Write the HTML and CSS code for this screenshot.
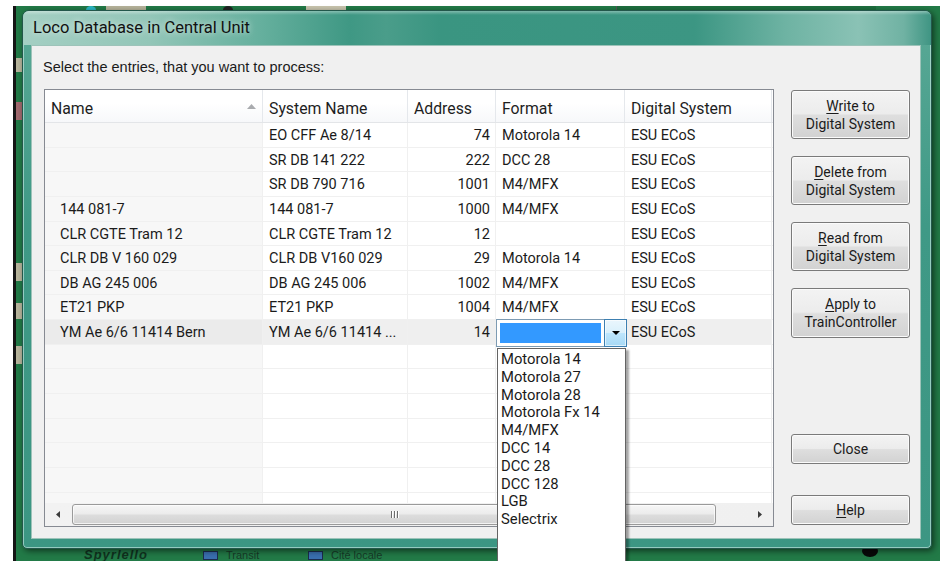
FILE: index.html
```html
<!DOCTYPE html>
<html lang="en">
<head>
<meta charset="utf-8">
<title>Loco Database in Central Unit</title>
<link rel="stylesheet" href="styles.css">
</head>
<body>
<!-- layout canvas of the host application, partly hidden by the dialog -->
<div class="desktop">
  <div class="track-strip">
    <span class="tile tile-a"></span>
    <span class="knob knob-a"></span>
    <span class="tile tile-b"></span>
    <span class="knob knob-b"></span>
    <span class="tile tile-c"></span>
  </div>
  <div class="side-tiles">
    <span class="stile s1"></span>
    <span class="stile s2"></span>
    <span class="stile s3"></span>
    <span class="stile s4"></span>
    <span class="stile s5"></span>
  </div>
  <div class="legend">
    <span class="legend-brand">Spyrlello</span>
    <span class="legend-item legend-transit"><i class="swatch"></i>Transit</span>
    <span class="legend-item legend-local"><i class="swatch"></i>Cité locale</span>
  </div>
  <span class="bollard"></span>
</div>

<div class="window">
  <div class="titlebar">Loco Database in Central Unit</div>
  <div class="client">
    <div class="prompt">Select the entries, that you want to process:</div>
    <div class="main">
      <div class="listview">
        <div class="lv-header">
          <div class="hcell hcell-name">Name
            <svg class="sort-arrow" width="9" height="5" viewBox="0 0 9 5"><polygon points="0,5 4.5,0 9,5" fill="#a9abae"/></svg>
          </div>
          <div class="hcell">System Name</div>
          <div class="hcell">Address</div>
          <div class="hcell">Format</div>
          <div class="hcell">Digital System</div>
        </div>
        <div class="lv-body">
          <div class="row"><div class="c c-name"></div><div class="c">EO CFF Ae 8/14</div><div class="c c-addr">74</div><div class="c">Motorola 14</div><div class="c">ESU ECoS</div></div>
          <div class="row"><div class="c c-name"></div><div class="c">SR DB 141 222</div><div class="c c-addr">222</div><div class="c">DCC 28</div><div class="c">ESU ECoS</div></div>
          <div class="row"><div class="c c-name"></div><div class="c">SR DB 790 716</div><div class="c c-addr">1001</div><div class="c">M4/MFX</div><div class="c">ESU ECoS</div></div>
          <div class="row"><div class="c c-name">144 081-7</div><div class="c">144 081-7</div><div class="c c-addr">1000</div><div class="c">M4/MFX</div><div class="c">ESU ECoS</div></div>
          <div class="row"><div class="c c-name">CLR CGTE Tram 12</div><div class="c">CLR CGTE Tram 12</div><div class="c c-addr">12</div><div class="c"></div><div class="c">ESU ECoS</div></div>
          <div class="row"><div class="c c-name">CLR DB V 160 029</div><div class="c">CLR DB V160 029</div><div class="c c-addr">29</div><div class="c">Motorola 14</div><div class="c">ESU ECoS</div></div>
          <div class="row"><div class="c c-name">DB AG 245 006</div><div class="c">DB AG 245 006</div><div class="c c-addr">1002</div><div class="c">M4/MFX</div><div class="c">ESU ECoS</div></div>
          <div class="row"><div class="c c-name">ET21 PKP</div><div class="c">ET21 PKP</div><div class="c c-addr">1004</div><div class="c">M4/MFX</div><div class="c">ESU ECoS</div></div>
          <div class="row row-selected"><div class="c c-name">YM Ae 6/6 11414 Bern</div><div class="c">YM Ae 6/6 11414 ...</div><div class="c c-addr">14</div>
            <div class="c c-edit">
              <div class="combo">
                <span class="combo-value"></span>
                <span class="combo-btn"><svg width="8" height="4" viewBox="0 0 8 4"><polygon points="0,0 8,0 4,4" fill="#000"/></svg></span>
              </div>
            </div>
            <div class="c">ESU ECoS</div></div>
          <div class="row"><div class="c c-name"></div><div class="c"></div><div class="c c-addr"></div><div class="c"></div><div class="c"></div></div>
          <div class="row"><div class="c c-name"></div><div class="c"></div><div class="c c-addr"></div><div class="c"></div><div class="c"></div></div>
          <div class="row"><div class="c c-name"></div><div class="c"></div><div class="c c-addr"></div><div class="c"></div><div class="c"></div></div>
          <div class="row"><div class="c c-name"></div><div class="c"></div><div class="c c-addr"></div><div class="c"></div><div class="c"></div></div>
          <div class="row"><div class="c c-name"></div><div class="c"></div><div class="c c-addr"></div><div class="c"></div><div class="c"></div></div>
          <div class="row"><div class="c c-name"></div><div class="c"></div><div class="c c-addr"></div><div class="c"></div><div class="c"></div></div>
          <div class="row"><div class="c c-name"></div><div class="c"></div><div class="c c-addr"></div><div class="c"></div><div class="c"></div></div>
        </div>
        <div class="hscroll">
          <span class="sb-arrow"><svg width="4" height="7" viewBox="0 0 4 7"><polygon points="4,0 0,3.5 4,7" fill="#3c3c3c"/></svg></span>
          <span class="sb-track">
            <span class="sb-thumb"><span class="grip"><i></i><i></i><i></i></span></span>
          </span>
          <span class="sb-arrow"><svg width="4" height="7" viewBox="0 0 4 7"><polygon points="0,0 4,3.5 0,7" fill="#3c3c3c"/></svg></span>
        </div>
        <ul class="droplist">
          <li>Motorola 14</li>
          <li>Motorola 27</li>
          <li>Motorola 28</li>
          <li>Motorola Fx 14</li>
          <li>M4/MFX</li>
          <li>DCC 14</li>
          <li>DCC 28</li>
          <li>DCC 128</li>
          <li>LGB</li>
          <li>Selectrix</li>
        </ul>
      </div>
      <div class="buttons">
        <button class="btn btn-tall"><u>W</u>rite to<br>Digital System</button>
        <button class="btn btn-tall"><u>D</u>elete from<br>Digital System</button>
        <button class="btn btn-tall"><u>R</u>ead from<br>Digital System</button>
        <button class="btn btn-tall"><u>A</u>pply to<br>TrainController</button>
        <button class="btn btn-close">Close</button>
        <button class="btn btn-help"><u>H</u>elp</button>
      </div>
    </div>
  </div>
</div>
</body>
</html>
```

FILE: styles.css
```css
* { box-sizing: border-box; }

html, body { margin: 0; padding: 0; }

body {
  position: relative;
  width: 940px;
  height: 561px;
  overflow: hidden;
  background: #ffffff;
  font-family: Roboto, "Liberation Sans", sans-serif;
  color: #1b1b1b;
}

/* ---------- host application canvas ---------- */
.desktop {
  position: absolute;
  left: 13px;
  top: 6px;
  right: 0;
  bottom: 0;
  background: #227a47;
  border-left: 3px solid #151515;
}

.track-strip .tile,
.track-strip .knob,
.side-tiles .stile,
.bollard { position: absolute; }

.tile { height: 6px; top: 0; }
.tile-a { left: 90px; width: 40px; background: #b6b39a; }
.tile-b { left: 290px; width: 40px; background: #c8c4ad; }
.tile-c { left: 600px; width: 260px; background: #1d6e3e; border-left: 1px solid #555; }
.knob { top: 0; width: 10px; height: 8px; border-radius: 50%; }
.knob-a { left: 70px; background: #2ab7c4; }
.knob-b { left: 207px; background: #222; }

.stile { left: 0; width: 6px; background: #b8b59c; }
.s1 { top: 52px; height: 14px; }
.s2 { top: 96px; height: 18px; background: #a26a6f; }
.s3 { top: 257px; height: 18px; }
.s4 { top: 297px; height: 16px; }
.s5 { top: 340px; height: 18px; }

.legend {
  position: absolute;
  left: 0;
  top: 543px;
  width: 420px;
  height: 12px;
}
.legend-brand {
  position: absolute;
  left: 68px;
  top: -1px;
  font: italic bold 13px/13px "Liberation Sans", sans-serif;
  color: #10331f;
  letter-spacing: 1px;
}
.legend-item {
  position: absolute;
  top: 0;
  font: 11px/12px "Liberation Sans", sans-serif;
  color: #173a27;
}
.legend-transit { left: 187px; }
.legend-local { left: 292px; }
.swatch {
  display: inline-block;
  width: 15px;
  height: 9px;
  margin-right: 8px;
  background: #3a6fb0;
  border: 1px solid #1c2d4e;
  vertical-align: -1px;
}
.bollard {
  left: 846px;
  top: 539px;
  width: 16px;
  height: 12px;
  border-radius: 50%;
  background: #080808;
}

/* ---------- dialog window ---------- */
.window {
  position: absolute;
  left: 22px;
  top: 10px;
  width: 910px;
  height: 539px;
  display: flex;
  flex-direction: column;
  padding: 0 10px 9px 8px;
  border: 1px solid #23574b;
  border-radius: 7px 7px 5px 5px;
  background: linear-gradient(180deg, #5aa996 0, #3f9986 40%, #3c9683 100%);
  box-shadow: inset 0 0 0 1px rgba(220, 245, 238, 0.55), 2px 2px 6px rgba(0, 0, 0, 0.55);
}

.titlebar {
  flex: none;
  height: 34px;
  margin: 0 -10px 0 -8px;
  padding: 1px 0 0 10px;
  line-height: 31px;
  font-size: 16.5px;
  color: #111111;
  border-radius: 6px 6px 0 0;
  background:
    linear-gradient(180deg, rgba(255,255,255,0.35) 0, rgba(255,255,255,0) 4px),
    linear-gradient(90deg, #a4cfc3 0, #93c6b8 14%, #66b09e 26%, #3f9884 36%, #4a9d8a 40%, #3a9581 46%, #3c9683 74%, #6eb3a3 84%, #8ac2b5 92%, #70b2a3 97%, #3f9583 100%);
  text-shadow: 0 0 6px rgba(255, 255, 255, 0.75);
}

.client {
  flex: 1;
  display: flex;
  flex-direction: column;
  padding: 0 10px 11px 12px;
  background: #f0f0f0;
  border: 1px solid #9dc3b9;
}

.prompt {
  flex: none;
  height: 43px;
  padding-top: 13px;
  margin-left: -1px;
  font: 14.5px/16px "Liberation Sans", sans-serif;
  color: #1b1b1b;
}

.main {
  flex: 1;
  display: flex;
  gap: 17px;
}

/* ---------- list view ---------- */
.listview {
  position: relative;
  width: 730px;
  height: 438px;
  display: flex;
  flex-direction: column;
  background: #ffffff;
  border: 1px solid #868a92;
}

.lv-header,
.row {
  display: grid;
  grid-template-columns: 218px 145px 88px 129px 147px;
}

.lv-header {
  flex: none;
  height: 33px;
  border-bottom: 1px solid #e3e5e8;
  background: linear-gradient(180deg, #ffffff 0, #ffffff 40%, #f7f8fa 100%);
}

.hcell {
  display: flex;
  align-items: center;
  justify-content: space-between;
  padding: 4px 6px 0 6px;
  font-size: 15.8px;
  color: #1e1e1e;
  border-right: 1px solid #e5e8ec;
  white-space: nowrap;
}
.hcell-name { padding-right: 6px; }
.sort-arrow { margin-top: -4px; }

.lv-body {
  flex: none;
  height: 380px;
  overflow: hidden;
}

.row {
  height: 24.65px;
  border-bottom: 1px solid #f0f0f0;
}

.c {
  padding-top: 2px;
  padding-left: 6px;
  font-size: 14.5px;
  line-height: 22px;
  white-space: nowrap;
  overflow: hidden;
  border-right: 1px solid #f0f0f0;
  color: #1b1b1b;
}
.c-name { padding-left: 15px; background: #f7f7f7; }
.c-addr { padding-left: 0; padding-right: 5px; text-align: right; }

.row-selected .c { background: #efefef; }
.row-selected .c-name { background: #ebebeb; }
.row-selected .c-edit { overflow: visible; position: relative; background: #efefef; }

/* in-place format editor */
.combo {
  position: absolute;
  left: 0;
  top: -1px;
  width: 131px;
  height: 28px;
  display: flex;
  align-items: stretch;
  background: #ffffff;
  border: 1px solid #7d9bb3;
}
.combo-value {
  width: 101px;
  margin: 3px 0 3px 3px;
  background: #3399ff;
}
.combo-btn {
  margin-left: auto;
  width: 23px;
  display: flex;
  align-items: center;
  justify-content: center;
  border: 1px solid #3c7fb1;
  margin-top: -1px;
  margin-bottom: -1px;
  margin-right: -1px;
  background: linear-gradient(180deg, #eaf6fd 0, #d9f0fc 50%, #bee6fd 50%, #a7d9f5 100%);
  box-shadow: inset 0 0 0 1px rgba(255, 255, 255, 0.6);
}

.droplist {
  position: absolute;
  left: 452px;
  top: 258px;
  width: 129px;
  height: 230px;
  margin: 0;
  padding: 2px 0 0 3px;
  list-style: none;
  background: #ffffff;
  border: 1px solid #646464;
  box-shadow: 3px 2px 2px rgba(0, 0, 0, 0.35);
  z-index: 5;
}
.droplist li {
  font-size: 14.8px;
  line-height: 17.8px;
  color: #1b1b1b;
  white-space: nowrap;
}

/* horizontal scroll bar */
.hscroll {
  flex: none;
  height: 23px;
  display: flex;
  align-items: stretch;
  background: linear-gradient(90deg, #f2f2f2, #f0f0f0);
}
.sb-arrow {
  width: 26px;
  display: flex;
  align-items: center;
  justify-content: center;
}
.sb-track {
  flex: 1;
  display: flex;
  padding: 1px 31px 1px 1px;
}
.sb-thumb {
  flex: 1;
  display: flex;
  align-items: center;
  justify-content: center;
  border: 1px solid #9a9a9a;
  border-radius: 3px;
  background: linear-gradient(180deg, #f6f6f6 0, #ececec 45%, #dcdcdc 55%, #d2d2d2 100%);
  box-shadow: inset 0 0 0 1px rgba(255, 255, 255, 0.7);
}
.grip { display: flex; gap: 2px; }
.grip i {
  display: block;
  width: 1px;
  height: 7px;
  background: #6d6d6d;
  box-shadow: 1px 0 0 #ffffff;
}

/* ---------- command buttons ---------- */
.buttons {
  width: 119px;
  display: flex;
  flex-direction: column;
  padding: 1px 0 2px 0;
}

.btn {
  width: 119px;
  margin: 0;
  padding: 0;
  font-family: Roboto, "Liberation Sans", sans-serif;
  font-size: 14px;
  line-height: 18px;
  color: #1b1b1b;
  text-align: center;
  border: 1px solid #7a7a7a;
  border-radius: 3px;
  background: linear-gradient(180deg, #f3f3f3 0, #ececec 48%, #dedede 52%, #d2d2d2 100%);
  box-shadow: inset 0 0 0 1px #fbfbfb;
}
.btn u { text-decoration-thickness: 1px; text-underline-offset: 2px; }
.btn-tall { height: 49px; margin-bottom: 17px; }
.btn-tall:nth-child(4) { height: 50px; margin-bottom: 0; }
.btn-close { height: 30px; margin-top: auto; }
.btn-help { height: 30px; margin-top: 31px; }
```
